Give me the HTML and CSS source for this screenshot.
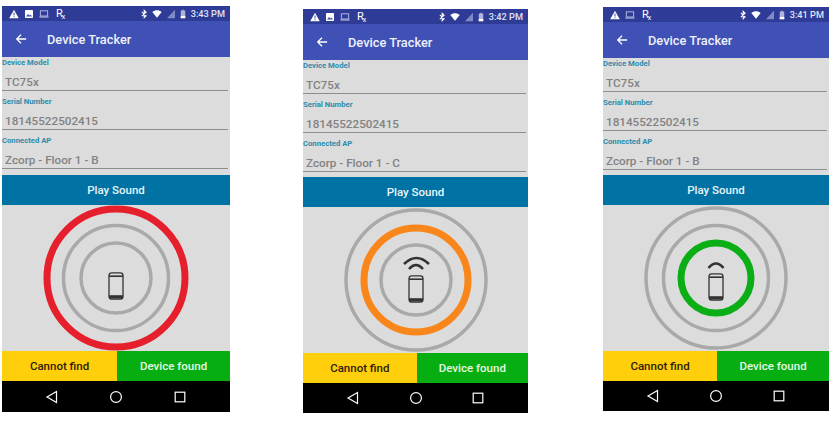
FILE: index.html
```html
<!DOCTYPE html>
<html lang="en">
<head>
  <meta charset="UTF-8">
  <title>Device Tracker</title>
  <link rel="stylesheet" href="styles.css">
</head>
<body>
  <!-- shared icons -->
  <svg class="defs" width="0" height="0">
    <symbol id="i-alert" viewBox="0 0 10 10"><path d="M5 .8 9.800 9.200H.2Z" fill="#fff"/><path d="M4.500 3.600h1v3h-1zM4.500 7.200h1v1h-1z" fill="#3f51b5"/></symbol>
    <symbol id="i-image" viewBox="0 0 10 10"><rect x="1" y="1" width="8" height="8" rx=".8" fill="#fff"/><path d="M2 7.600 4 5l1.400 1.600 1-1L8 7.600Z" fill="#3f51b5"/></symbol>
    <symbol id="i-laptop" viewBox="0 0 10 10"><rect x="1.400" y="1.800" width="7.200" height="5.200" fill="none" stroke="#aeb4dc" stroke-width="1"/><rect x=".4" y="7.400" width="9.200" height="1.200" fill="#aeb4dc"/></symbol>
    <symbol id="i-bt" viewBox="1 0 7.500 12"><path d="M2 3.400 7.400 8.200 5 10.600V1.400L7.400 3.800 2 8.600" fill="none" stroke="#fff" stroke-width="1.300"/></symbol>
    <symbol id="i-wifi" viewBox="0 0 12 10"><path d="M.4 2.600C3.600-.2 8.400-.2 11.600 2.600L6 9.400Z" fill="#fff"/></symbol>
    <symbol id="i-signal" viewBox="1 1 8 8"><path d="M9 .8V9.200H1Z" fill="#7f89c6"/></symbol>
    <symbol id="i-battery" viewBox="0 0 8 12"><path d="M3 .4h2v1h2v10.200H1V1.400h2Z" fill="#aeb4dc"/><rect x="1" y="8.600" width="6" height="3" fill="#fff"/></symbol>
    <symbol id="i-back" viewBox="0 0 14 14"><path d="M13 7H2M7 2 2 7l5 5" fill="none" stroke="#fff" stroke-width="1.500"/></symbol>
    <symbol id="i-phone" viewBox="0 0 16 28"><rect x="1" y=".8" width="14" height="26.400" rx="2.600" fill="#dcdcdc" stroke="#333" stroke-width="1.300"/><rect x="1" y="3.400" width="14" height="1.600" fill="#333"/><rect x="1" y="23.200" width="14" height="3.400" fill="#333"/></symbol>
    <symbol id="i-nav-back" viewBox="0 0 14 14"><path d="M11.500 1.500V12.500L2 7Z" fill="none" stroke="#fff" stroke-width="1.200"/></symbol>
    <symbol id="i-nav-home" viewBox="0 0 14 14"><circle cx="7" cy="7" r="5.400" fill="none" stroke="#fff" stroke-width="1.200"/></symbol>
    <symbol id="i-nav-recent" viewBox="0 0 14 14"><rect x="2.200" y="2.200" width="9.600" height="9.600" fill="none" stroke="#fff" stroke-width="1.200"/></symbol>
  </svg>

  <main class="screens">
    <section class="phone phone-far">
      <div class="statusbar">
        <svg class="st"><use href="#i-alert"/></svg>
        <svg class="st"><use href="#i-image"/></svg>
        <svg class="st"><use href="#i-laptop"/></svg>
        <span class="rx">R<sub>x</sub></span>
        <span class="spacer"></span>
        <svg class="st st-bt"><use href="#i-bt"/></svg>
        <svg class="st"><use href="#i-wifi"/></svg>
        <svg class="st st-signal"><use href="#i-signal"/></svg>
        <svg class="st st-batt"><use href="#i-battery"/></svg>
        <span class="time">3:43 PM</span>
      </div>
      <header class="appbar">
        <svg class="back"><use href="#i-back"/></svg>
        <h1>Device Tracker</h1>
      </header>
      <div class="fields">
        <div class="field"><label>Device Model</label><div class="value">TC75x</div></div>
        <div class="field"><label>Serial Number</label><div class="value">18145522502415</div></div>
        <div class="field"><label>Connected AP</label><div class="value">Zcorp - Floor 1 - B</div></div>
      </div>
      <button class="play">Play Sound</button>
      <div class="radar">
        <svg class="rings" viewBox="0 0 150 146">
          <circle cx="75" cy="73" r="69" class="ring-on red"/>
          <circle cx="75" cy="73" r="52.500" class="ring"/>
          <circle cx="75" cy="73" r="35" class="ring"/>
          <use href="#i-phone" x="67" y="67" width="16" height="28"/>
        </svg>
      </div>
      <div class="actions">
        <button class="cannot">Cannot find</button>
        <button class="found">Device found</button>
      </div>
      <nav class="navbar">
        <svg><use href="#i-nav-back"/></svg>
        <svg><use href="#i-nav-home"/></svg>
        <svg><use href="#i-nav-recent"/></svg>
      </nav>
    </section>

    <section class="phone phone-mid">
      <div class="statusbar">
        <svg class="st"><use href="#i-alert"/></svg>
        <svg class="st"><use href="#i-image"/></svg>
        <svg class="st"><use href="#i-laptop"/></svg>
        <span class="rx">R<sub>x</sub></span>
        <span class="spacer"></span>
        <svg class="st st-bt"><use href="#i-bt"/></svg>
        <svg class="st"><use href="#i-wifi"/></svg>
        <svg class="st st-signal"><use href="#i-signal"/></svg>
        <svg class="st st-batt"><use href="#i-battery"/></svg>
        <span class="time">3:42 PM</span>
      </div>
      <header class="appbar">
        <svg class="back"><use href="#i-back"/></svg>
        <h1>Device Tracker</h1>
      </header>
      <div class="fields">
        <div class="field"><label>Device Model</label><div class="value">TC75x</div></div>
        <div class="field"><label>Serial Number</label><div class="value">18145522502415</div></div>
        <div class="field"><label>Connected AP</label><div class="value">Zcorp - Floor 1 - C</div></div>
      </div>
      <button class="play">Play Sound</button>
      <div class="radar">
        <svg class="rings" viewBox="0 0 150 146">
          <circle cx="75" cy="73" r="70" class="ring"/>
          <circle cx="75" cy="73" r="52" class="ring-on orange"/>
          <circle cx="75" cy="73" r="35" class="ring"/>
          <path d="M63 57Q75.500 45 88 57" class="wave"/>
          <path d="M68 62Q75 54 82 62" class="wave"/>
          <use href="#i-phone" x="67" y="68" width="16" height="28"/>
        </svg>
      </div>
      <div class="actions">
        <button class="cannot">Cannot find</button>
        <button class="found">Device found</button>
      </div>
      <nav class="navbar">
        <svg><use href="#i-nav-back"/></svg>
        <svg><use href="#i-nav-home"/></svg>
        <svg><use href="#i-nav-recent"/></svg>
      </nav>
    </section>

    <section class="phone phone-near">
      <div class="statusbar">
        <svg class="st"><use href="#i-alert"/></svg>
        <svg class="st"><use href="#i-laptop"/></svg>
        <span class="rx">R<sub>x</sub></span>
        <span class="spacer"></span>
        <svg class="st st-bt"><use href="#i-bt"/></svg>
        <svg class="st"><use href="#i-wifi"/></svg>
        <svg class="st st-signal"><use href="#i-signal"/></svg>
        <svg class="st st-batt"><use href="#i-battery"/></svg>
        <span class="time">3:41 PM</span>
      </div>
      <header class="appbar">
        <svg class="back"><use href="#i-back"/></svg>
        <h1>Device Tracker</h1>
      </header>
      <div class="fields">
        <div class="field"><label>Device Model</label><div class="value">TC75x</div></div>
        <div class="field"><label>Serial Number</label><div class="value">18145522502415</div></div>
        <div class="field"><label>Connected AP</label><div class="value">Zcorp - Floor 1 - B</div></div>
      </div>
      <button class="play">Play Sound</button>
      <div class="radar">
        <svg class="rings" viewBox="0 0 150 146">
          <circle cx="75" cy="73" r="70" class="ring"/>
          <circle cx="75" cy="73" r="52.500" class="ring"/>
          <circle cx="75" cy="73" r="35" class="ring-on green"/>
          <path d="M67.500 63Q75 54 82.500 63" class="wave"/>
          <use href="#i-phone" x="67" y="68" width="16" height="28"/>
        </svg>
      </div>
      <div class="actions">
        <button class="cannot">Cannot find</button>
        <button class="found">Device found</button>
      </div>
      <nav class="navbar">
        <svg><use href="#i-nav-back"/></svg>
        <svg><use href="#i-nav-home"/></svg>
        <svg><use href="#i-nav-recent"/></svg>
      </nav>
    </section>
  </main>
</body>
</html>
```

FILE: styles.css
```css
* {
  box-sizing: border-box;
}

html, body {
  margin: 0;
  height: 100%;
  background: #fff;
  overflow: hidden;
}

body {
  font-family: Roboto, sans-serif;
}

.defs {
  display: block;
  height: 0;
}

.screens {
  display: flex;
  align-items: flex-start;
}

.phone {
  display: flex;
  flex-direction: column;
  height: 404px;
  background: #dcdcdc;
}

.phone-far {
  width: 228px;
  height: 406px;
  margin: 6px 0 0 2px;
}

.phone-far .fields {
  height: 118px;
}

.phone-mid {
  width: 225px;
  margin: 9px 0 0 73px;
}

.phone-near {
  width: 226px;
  margin: 7px 0 0 75px;
}

.statusbar {
  display: flex;
  align-items: center;
  gap: 5px;
  height: 15px;
  padding: 0 5px 0 7px;
  background: #2f3c97;
  color: #dfe2f3;
}

.st {
  width: 10px;
  height: 10px;
}

.st-bt {
  width: 6px;
}

.st-signal {
  width: 8px;
}

.st-batt {
  width: 6px;
}

.rx {
  margin-left: 2px;
  font-size: 11px;
  color: #fff;
  line-height: 10px;
}

.rx sub {
  font-size: 7px;
  vertical-align: -2px;
  line-height: 0;
  margin-left: -1px;
}

.spacer {
  flex: 1;
}

.time {
  font-size: 9.200px;
  font-weight: 500;
}

.appbar {
  display: flex;
  align-items: center;
  height: 36px;
  padding-left: 13px;
  background: #3f51b5;
  color: #eef0fa;
}

.back {
  width: 12px;
  height: 12px;
}

.appbar h1 {
  margin: 0 0 0 20px;
  font-size: 12.800px;
  font-weight: 500;
}

.fields {
  display: flex;
  flex-direction: column;
  height: 117px;
  padding-top: 1px;
}

.field {
  flex: none;
  height: 39px;
  margin-right: 2px;
}

.field label {
  display: block;
  height: 12px;
  font-size: 7.700px;
  line-height: 10px;
  font-weight: 700;
  color: #2b8cab;
}

.value {
  height: 20px;
  margin-top: 1px;
  padding: 4px 0 0 3px;
  border-bottom: 1px solid #8d8d8d;
  font-size: 11.700px;
  line-height: 15px;
  font-weight: 500;
  color: #828282;
}

button {
  border: none;
  padding: 0;
  font-family: inherit;
  font-weight: 500;
  font-size: 11.500px;
}

.play {
  height: 30px;
  background: #0073a4;
  color: #e8f4f8;
}

.radar {
  display: flex;
  justify-content: center;
  height: 146px;
}

.rings {
  width: 150px;
  height: 146px;
  overflow: visible;
}

.ring, .ring-on, .wave {
  fill: none;
}

.ring {
  stroke: #a9a9a9;
  stroke-width: 3.500px;
}

.ring-on {
  stroke-width: 7px;
}

.ring-on.red {
  stroke: #e61f2d;
}

.ring-on.orange {
  stroke: #f8861a;
}

.ring-on.green {
  stroke: #0cae16;
}

.wave {
  stroke: #333;
  stroke-width: 2.600px;
}

.actions {
  display: flex;
  height: 30px;
}

.cannot {
  flex: 0 0 50.500%;
  background: #ffcf0b;
  color: #2d1c05;
}

.found {
  flex: 1;
  background: #07ae12;
  color: #e6f8e4;
}

.navbar {
  display: flex;
  flex: 1;
  align-items: center;
  justify-content: space-between;
  padding: 0 43px;
  background: #000;
}

.navbar svg {
  width: 14px;
  height: 14px;
}
```
